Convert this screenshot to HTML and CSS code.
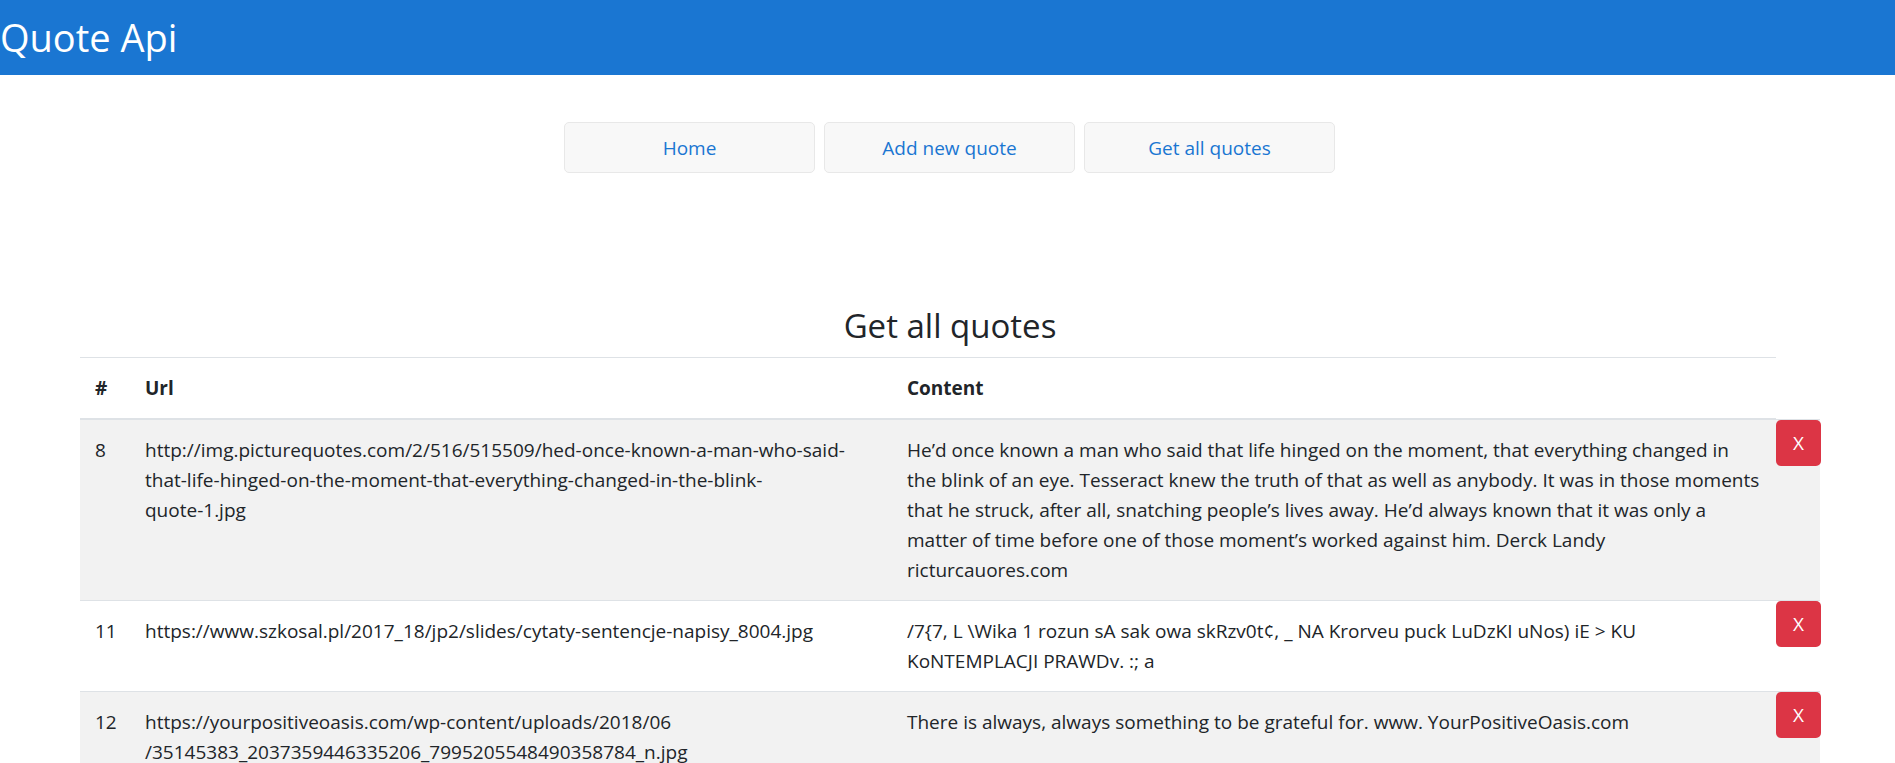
FILE: index.html
```html
<!DOCTYPE html>
<html lang="en">
<head>
<meta charset="utf-8">
<title>Quote Api</title>
<link rel="stylesheet" href="styles.css">
</head>
<body>
<header class="topbar">
  <h1 class="brand">Quote Api</h1>
</header>
<nav class="nav">
  <a class="nav-btn" href="#">Home</a>
  <a class="nav-btn" href="#">Add new quote</a>
  <a class="nav-btn" href="#">Get all quotes</a>
</nav>
<main class="main">
  <h3 class="title">Get all quotes</h3>
  <table class="quotes">
    <colgroup>
      <col class="c-id">
      <col class="c-url">
      <col class="c-content">
      <col class="c-action">
    </colgroup>
    <thead>
      <tr>
        <th>#</th>
        <th>Url</th>
        <th>Content</th>
      </tr>
    </thead>
    <tbody>
      <tr class="odd">
        <td class="num">8</td>
        <td class="lines">http://img.picturequotes.com/2/516/515509/hed-once-known-a-man-who-said-<br>that-life-hinged-on-the-moment-that-everything-changed-in-the-blink-<br>quote-1.jpg</td>
        <td class="lines">He’d once known a man who said that life hinged on the moment, that everything changed in<br>the blink of an eye. Tesseract knew the truth of that as well as anybody. It was in those moments<br>that he struck, after all, snatching people’s lives away. He’d always known that it was only a<br>matter of time before one of those moment’s worked against him. Derck Landy<br>ricturcauores.com</td>
        <td class="act"><button class="del">X</button></td>
      </tr>
      <tr>
        <td class="num">11</td>
        <td>https://www.szkosal.pl/2017_18/jp2/slides/cytaty-sentencje-napisy_8004.jpg</td>
        <td class="lines">/7{7, L \Wika 1 rozun sA sak owa skRzv0t¢, _ NA Krorveu puck LuDzKI uNos) iE &gt; KU<br>KoNTEMPLACJI PRAWDv. :; a</td>
        <td class="act"><button class="del">X</button></td>
      </tr>
      <tr class="odd">
        <td class="num">12</td>
        <td class="lines">https://yourpositiveoasis.com/wp-content/uploads/2018/06<br>/35145383_2037359446335206_7995205548490358784_n.jpg</td>
        <td>There is always, always something to be grateful for. www. YourPositiveOasis.com</td>
        <td class="act"><button class="del">X</button></td>
      </tr>
    </tbody>
  </table>
</main>
</body>
</html>
```

FILE: styles.css
```css
html, body {
  margin: 0;
  padding: 0;
}
body {
  font-family: "Open Sans", "Noto Sans", sans-serif;
  font-size: 19px;
  line-height: 30px;
  color: #212529;
  background: #fff;
}
.topbar {
  background: #1a76d2;
  height: 75px;
}
.brand {
  margin: 0;
  font-size: 38px;
  font-weight: 400;
  line-height: 75px;
  color: #fff;
}
.nav {
  display: flex;
  justify-content: center;
  gap: 9px;
  margin-top: 47px;
  padding-left: 4px;
}
.nav-btn {
  box-sizing: border-box;
  width: 251px;
  height: 51px;
  display: flex;
  align-items: center;
  justify-content: center;
  background: #f8f8f8;
  border: 1px solid #e8e8e8;
  border-radius: 5px;
  color: #1a76d2;
  text-decoration: none;
}
.main {
  padding: 0 75px 0 80px;
  margin-top: 132px;
}
.title {
  margin: 0 0 10px;
  font-size: 33px;
  font-weight: 400;
  line-height: 42px;
  text-align: center;
}
.quotes {
  width: 100%;
  border-collapse: collapse;
  table-layout: fixed;
}
.c-id { width: 50px; }
.c-url { width: 762px; }
.c-content { width: 884px; }
.c-action { width: 44px; }
.quotes th,
.quotes td {
  padding: 15px;
  text-align: left;
  vertical-align: top;
  border-top: 1px solid #dee2e6;
}
.quotes td {
  overflow-wrap: break-word;
}
.quotes td.num,
.quotes td.lines {
  white-space: nowrap;
  overflow-wrap: normal;
}
.quotes th {
  font-weight: 700;
}
.quotes thead th {
  border-bottom: 2px solid #dee2e6;
}
.quotes tr.odd td {
  background: #f2f2f2;
}
.quotes td.act {
  padding: 0;
}
.del {
  display: block;
  width: 45px;
  height: 46px;
  padding: 0;
  border: 0;
  border-radius: 5px;
  background: #dc3545;
  color: #fff;
  font-family: "Open Sans", "Noto Sans", sans-serif;
  font-size: 19px;
  line-height: 30px;
}
```
